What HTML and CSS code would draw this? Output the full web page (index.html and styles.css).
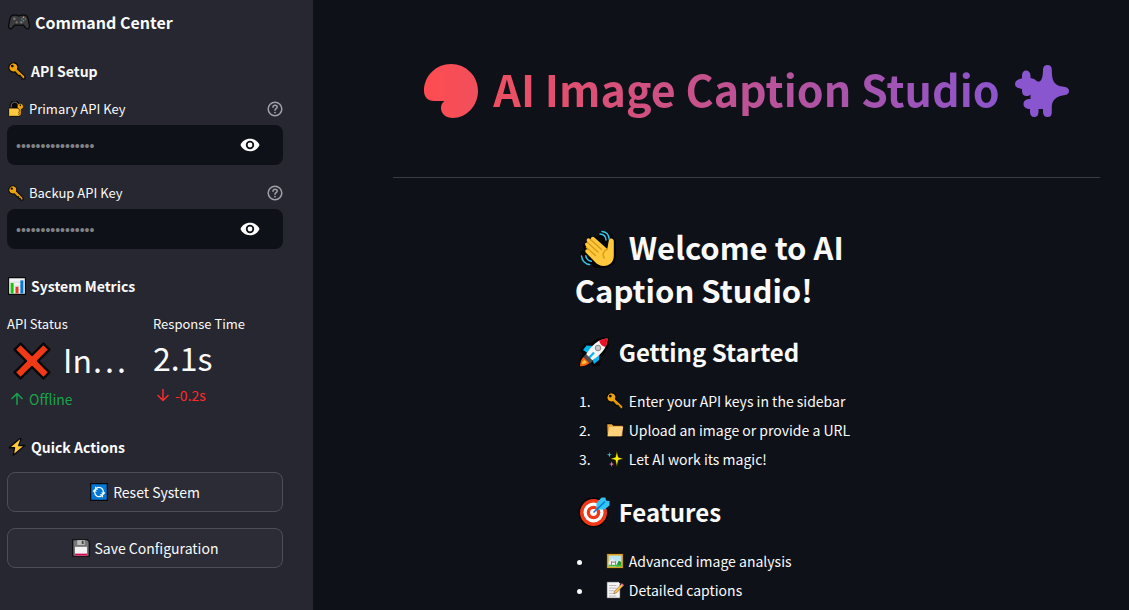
FILE: index.html
```html
<!DOCTYPE html>
<html lang="en">
<head>
<meta charset="utf-8">
<meta name="viewport" content="width=device-width, initial-scale=1">
<title>AI Image Caption Studio</title>
<link rel="stylesheet" href="styles.css">
</head>
<body>
<svg class="sprite" aria-hidden="true">
  <symbol id="gamepad" viewBox="0 0 24 24"><path d="M6 4.500h4l1 .8h2l1-.8h4c2.200 0 3.200 1.500 3.800 3.800l1.500 7.200c.7 4-2.600 5-4.300 2.500l-2.200-2.700H7.200L5 18c-1.700 2.500-5 1.500-4.300-2.500L2.200 8.300C2.800 6 3.800 4.500 6 4.500z" fill="#3b3b3d" stroke="#08080a" stroke-width="1.400"/><circle cx="7" cy="8.500" r="1.400" fill="#777"/><path d="M8.200 12.300h2.600M9.500 11v2.600" stroke="#777" stroke-width="1"/><circle cx="14.500" cy="12.300" r="1.300" fill="#777"/><circle cx="17" cy="7" r=".9" fill="#d9a441"/><circle cx="19" cy="8.800" r=".9" fill="#e0503c"/><circle cx="15.200" cy="8.800" r=".9" fill="#2f8fe0"/><circle cx="17" cy="10.500" r=".9" fill="#55a060"/></symbol>
  <symbol id="key" viewBox="0 0 24 24"><path d="M2.500 3.500C5-.2 11.500.2 13 5c.5 1.700.3 3-.3 4.300l9.800 9.500v3.700h-4v-2.300h-2.300v-2.400h-2.400L9.200 13C6 14.200 2.500 12.500 1.500 9.500c-.7-2.200-.3-4.300 1-6z" fill="#f0a30a" stroke="#08080a" stroke-width="1.600" stroke-linejoin="round"/><circle cx="5.700" cy="5.400" r="1.800" fill="#08080a"/><path d="M11 11.500l9.500 9" stroke="#c47f00" stroke-width="1"/></symbol>
  <symbol id="lock" viewBox="0 0 24 24"><path d="M4.800 12V7.500C4.800 3.700 7 1.700 10 1.700s5.200 2 5.200 5.800V12" fill="none" stroke="#08080a" stroke-width="4.600"/><path d="M4.800 12V7.500C4.800 3.700 7 1.700 10 1.700s5.200 2 5.200 5.800V12" fill="#08080a" stroke="#8d8d8d" stroke-width="1.200"/><rect x="1" y="10.500" width="18" height="12.500" rx="1" fill="#ffc83d" stroke="#08080a" stroke-width="1.400"/><path d="M14.500 5.500c1.500-2.500 6.500-2.500 8 .5s0 6-2.700 6.500v7.500l-2 2-1.800-2 1-1.500-1-1.500 1-1.500v-3c-2.500-1-4-4.500-2.500-7z" fill="#f0a30a" stroke="#08080a" stroke-width=".8"/><circle cx="18.500" cy="6.500" r="1.200" fill="#08080a"/></symbol>
  <symbol id="chart" viewBox="0 0 24 24"><path d="M.8.8h22.400v22.400H.8z" fill="#f2f2f2" stroke="#08080a" stroke-width="1.500"/><path d="M2 7h20M2 12h20M2 17h20" stroke="#d4d4d4"/><path d="M3.500 8h4v14h-4z" fill="#16c60c"/><path d="M10 13h4v9h-4z" fill="#e33b1e"/><path d="M16.500 4.500h4V22h-4z" fill="#0078d7"/></symbol>
  <symbol id="cross" viewBox="0 0 24 24"><path d="M4.800 1L12 8.200 19.200 1 23 4.800 15.800 12l7.200 7.200-3.800 3.800-7.200-7.200L4.800 23 1 19.200 8.200 12 1 4.800z" fill="#f03a17" stroke="#08080a" stroke-width="1.500" stroke-linejoin="round"/></symbol>
  <symbol id="bolt" viewBox="0 0 24 24"><path d="M15.500 1L1.500 13h7.300L7 23l15.500-13h-8.200l3.200-9z" fill="#ffc83d" stroke="#08080a" stroke-width="1.700" stroke-linejoin="round"/></symbol>
  <symbol id="reset" viewBox="0 0 24 24"><path d="M.9.9h22.200v22.200H.9z" fill="#0078d7" stroke="#08080a" stroke-width="1.600"/><g fill="none" stroke="#fff" stroke-width="1.500"><path d="M8 7.300c4-3.300 9.800-.6 9.800 4.700v2.500M16 16.700c-4 3.300-9.800.6-9.800-4.700V9.500"/><path d="M15.500 12.500l2.300 2.300 2.200-2.300M4 11.500l2.200-2.300 2.300 2.300M7.500 5v3.300h3M16.500 19v-3.300h-3"/></g></symbol>
  <symbol id="floppy" viewBox="0 0 24 24"><path d="M1 1h19.500L23 3.500V23H1z" fill="#77777a" stroke="#08080a" stroke-width="1.600"/><path d="M7 1.500h10V8H7z" fill="#bdbdbd"/><path d="M13 2.500h2.500v4.300H13z" fill="#444"/><path d="M4 10.500h16v11.700H4z" fill="#f3f3f3"/><path d="M4 19.500h16v2.700H4z" fill="#d3084e"/></symbol>
  <symbol id="wave" viewBox="0 0 38 38"><path d="M4 15l7-9 8 1 4-6 9 3 5 7v16l-2 7-8 4H16L3 29 1 22l4-2z" fill="#050507"/><path d="M6.500 15.500c-1.300-1.800.7-3.800 2.500-2.600l-1-1.400c-1.200-2 1.200-4.200 3-2.600l1.200 1c-1.200-2 1.200-4.200 3.200-2.400L28.300 19l1.500-8.500c.5-2.800 5-2.500 5 .7v14.500c0 6-4.300 10.300-10 10.300-4 0-6.500-1.700-8.500-3.700L7 22.800c-1.800-2 0-4.600 2.200-3.300z" fill="#ffc83d"/><path d="M9 13l10 9M11.500 9.500l11 10M7.500 17.500l9 8M28.500 19c-4.700 2-5.300 6.500-3.200 9" fill="none" stroke="#d99b18" stroke-width="1.400" stroke-linecap="round"/><path d="M21 4c3.500.2 5.800 2.500 6 6M23 1.500c4.500.5 7 3.500 7.200 7.800M6.800 25.800c.5 3 2.800 5 5.500 5.500M2.500 26c.5 4.800 4 8.300 8.200 8.600" fill="none" stroke="#32c5e9" stroke-width="1.500" stroke-linecap="round"/></symbol>
  <symbol id="rocket" viewBox="0 0 32 32"><path d="M31 1v8l-5 9-3 3-1 8-7 2-2-4-4 3-8 1 1-9 3-4-3-3 4-7 7-1 7-5z" fill="#050507"/><path d="M5 14l3.500-4.500 7 .5-6 7zM16 28l5-4 .5-6-7 6z" fill="#00b4f0"/><path d="M29.500 2.500C20 3 14 9 8 18.500l6 6C23 18.500 29 12.500 29.500 2.500z" fill="#f5f5f5"/><path d="M29.500 2.500c-3 .1-5.700.8-8.200 2.200.5 3.500 2.800 5.700 6.500 6.200 1.100-2.500 1.600-5.300 1.700-8.400z" fill="#e81224"/><circle cx="20" cy="12" r="2.800" fill="#c7c7c7" stroke="#858585"/><path d="M10 23l6-6.500" stroke="#00b4f0" stroke-width="2"/><path d="M8 18l7 7-3 2.500L5.500 21z" fill="#4b4b50"/><path d="M5.500 21l6 6c-2 2-5 3.500-9.500 3.200.2-4.200 1.200-7 3.500-9.200z" fill="#f7630c"/><path d="M6.500 24l2.400 2.300c-1 1-3 1.700-5 1.800.2-1.700 1-3 2.600-4.100z" fill="#ffc83d"/></symbol>
  <symbol id="folder" viewBox="0 0 24 24"><path d="M1 3.500h7l2 2h13l-.5 15.500H1.500z" fill="#eaa23b" stroke="#08080a" stroke-width="1.400"/><path d="M5 7.500h18l-3 12.800H2z" fill="#ffd27a"/></symbol>
  <symbol id="sparkles" viewBox="0 0 24 24"><path d="M14.500 1l2 8.500 7 2-7 2-2 9.500-2-9.500-7-2 7-2z" fill="#fff100" stroke="#08080a" stroke-width=".8"/><path d="M4.500 2.500l.8 3 2.700.8-2.700.8-.8 3-.8-3L1 6.300l2.700-.8z" fill="#32c5e9"/><path d="M7.500 15l.9 3 2.600.8-2.600.8-.9 3-.9-3-2.600-.8 2.600-.8z" fill="#f06ba8"/></symbol>
  <symbol id="target" viewBox="0 0 32 32"><circle cx="15.500" cy="16.500" r="15" fill="#050507"/><path d="M19 7l5-6h4v3h3v6l-6 5z" fill="#050507"/><circle cx="15.500" cy="16.500" r="13.500" fill="#f03a17"/><circle cx="15.500" cy="16.500" r="10" fill="#fff"/><circle cx="15.500" cy="16.500" r="6.800" fill="#f03a17"/><circle cx="15.500" cy="16.500" r="3.400" fill="#fff"/><path d="M18.500 13.500V7l5-5.500h4l.5 3 3.500.5v4.500l-5 4z" fill="#32c5f4"/><path d="M15.500 16.500L27 5.500" stroke="#0078d7" stroke-width="1.400"/></symbol>
  <symbol id="picture" viewBox="0 0 24 24"><path d="M.8 2h22.400v20H.8z" fill="#dda01e" stroke="#08080a"/><path d="M3.500 4.700h17v14.600h-17z" fill="#b9e2f2"/><path d="M3.500 13l5-4.500 5 5 4-4 3 3v6.800h-17z" fill="#e7eef0"/><path d="M13 19.300l4-8 3.500 2v6z" fill="#1b9d35"/><path d="M3.500 17h17v2.300h-17z" fill="#3fbb41"/><path d="M7 12l1.500 1h3L13 12v5H7z" fill="#815249"/><path d="M8 14h4v3H8z" fill="#fff"/></symbol>
  <symbol id="memo" viewBox="0 0 24 24"><path d="M1 1h16l2 2v20H1z" fill="#f5f5f5" stroke="#08080a"/><path d="M4 6h10M4 9.500h10M4 13h7M4 16.500h7M4 20h10" stroke="#b5b5b5" stroke-width="1.200"/><path d="M10.500 17l1-3.500L21 3.500 23.500 6 14 15.800z" fill="#ffc14d" stroke="#55401c" stroke-width=".6"/><path d="M20 4.500L21.500 3 24 5.500 22.500 7z" fill="#f2698b"/></symbol>
  <symbol id="help" viewBox="0 0 16 16"><g fill="none" stroke="#a0a1a8" stroke-width="1.500" stroke-linecap="round"><circle cx="8" cy="8" r="6.800"/><path d="M6 6.300c.1-1.500 1-2.100 2.100-2.100 1.200 0 2.100.7 2.100 1.800C10.200 7.600 8 7.700 8 9.300"/></g><circle cx="8" cy="11.600" r=".9" fill="#a0a1a8"/></symbol>
  <symbol id="eye" viewBox="0 0 20 14"><path d="M10 .8c4.400 0 8 2.500 9.500 6.200-1.500 3.700-5.100 6.200-9.500 6.200S2 10.700.5 7C2 3.300 5.600.8 10 .8z" fill="#fff"/><circle cx="10" cy="7" r="4.200" fill="#0e1117"/><circle cx="10" cy="7" r="2.400" fill="#fff"/></symbol>
</svg>

<div class="app">
  <aside class="sidebar">
    <h2 class="side-title"><svg class="icon icon-md"><use href="#gamepad"/></svg>Command Center</h2>

    <section class="group setup">
      <h3 class="side-heading"><svg class="icon icon-sm"><use href="#key"/></svg>API Setup</h3>
      <div class="field">
        <div class="field-head">
          <label for="primary"><svg class="icon icon-xs"><use href="#lock"/></svg>Primary API Key</label>
          <button class="plain" type="button" aria-label="Help for primary key"><svg class="help"><use href="#help"/></svg></button>
        </div>
        <div class="password">
          <input id="primary" type="password" placeholder="••••••••••••••••">
          <button class="plain" type="button" aria-label="Show primary key"><svg class="eye"><use href="#eye"/></svg></button>
        </div>
      </div>
      <div class="field">
        <div class="field-head">
          <label for="backup"><svg class="icon icon-xs"><use href="#key"/></svg>Backup API Key</label>
          <button class="plain" type="button" aria-label="Help for backup key"><svg class="help"><use href="#help"/></svg></button>
        </div>
        <div class="password">
          <input id="backup" type="password" placeholder="••••••••••••••••">
          <button class="plain" type="button" aria-label="Show backup key"><svg class="eye"><use href="#eye"/></svg></button>
        </div>
      </div>
    </section>

    <section class="group">
      <h3 class="side-heading"><svg class="icon icon-sm"><use href="#chart"/></svg>System Metrics</h3>
      <div class="metrics">
        <div class="metric">
          <span class="metric-label">API Status</span>
          <span class="metric-value with-icon"><svg class="icon icon-xl"><use href="#cross"/></svg><span>In<span class="ellipsis">…</span></span></span>
          <span class="delta up"><svg viewBox="0 0 14 14"><path d="M7 13V1.500M1.500 7L7 1.500 12.500 7"/></svg>Offline</span>
        </div>
        <div class="metric">
          <span class="metric-label">Response Time</span>
          <span class="metric-value">2.1s</span>
          <span class="delta down"><svg viewBox="0 0 14 14"><path d="M7 1v11.500M1.500 7L7 12.500 12.500 7"/></svg>-0.2s</span>
        </div>
      </div>
    </section>

    <section class="group actions">
      <h3 class="side-heading"><svg class="icon icon-sm"><use href="#bolt"/></svg>Quick Actions</h3>
      <button class="action" type="button"><svg class="icon icon-sm"><use href="#reset"/></svg>Reset System</button>
      <button class="action" type="button"><svg class="icon icon-sm"><use href="#floppy"/></svg>Save Configuration</button>
    </section>
  </aside>

  <main class="main">
    <h1 class="title">
      <svg class="title-icon" viewBox="0 0 54 54"><defs><linearGradient id="warm"><stop offset="0" stop-color="#ff4c50"/><stop offset="1" stop-color="#f04f5d"/></linearGradient></defs><path d="M27 0C42 0 54 12 54 27c0 15-12 27-25 27-7 0-12-4-12-10 0-3 1-5 3.500-7H10C4 37 0 33 0 27 0 12 12 0 27 0z" fill="url(#warm)"/></svg>
      <span class="title-text">AI Image Caption Studio</span>
      <svg class="title-icon" viewBox="0 0 54 54"><path d="M32.500 1c2.800 0 4.300 2 4.300 4.500 0 10 1.500 16 10.500 17 4 .5 6.700 1.500 6.700 4.500s-2.500 4-6.500 4.500c-6 .8-10.500 5-10.700 11v6c0 3-1.500 4.500-4.300 4.500S28 51 28 48v-3h-4.500v3c0 3-1.500 5-4.200 5S15 51 15 48v-3c-3.500 0-6.500-1.500-6.500-5s2.500-5 7-5v-4.500c-1 1-2.300 1.500-4 1.500-3 0-4.500-2-4.500-5v-2c-4-.5-7-2-7-5s3-5 7-5.500v-3c0-3 1.500-5 4-5s4.500 2 4.500 5v2.500c2.500.5 4.500 1 6 3C26 19.500 28 14 28 5.500 28 3 29.500 1 32.500 1z" fill="#8956d0"/></svg>
    </h1>
    <hr class="rule">
    <div class="columns">
      <article class="welcome">
        <h2><svg class="icon icon-xl"><use href="#wave"/></svg>Welcome to AI Caption Studio!</h2>
        <h3><svg class="icon icon-lg"><use href="#rocket"/></svg>Getting Started</h3>
        <ol>
          <li><svg class="icon icon-sm"><use href="#key"/></svg>Enter your API keys in the sidebar</li>
          <li><svg class="icon icon-sm"><use href="#folder"/></svg>Upload an image or provide a URL</li>
          <li><svg class="icon icon-sm"><use href="#sparkles"/></svg>Let AI work its magic!</li>
        </ol>
        <h3><svg class="icon icon-lg"><use href="#target"/></svg>Features</h3>
        <ul>
          <li><svg class="icon icon-sm"><use href="#picture"/></svg>Advanced image analysis</li>
          <li><svg class="icon icon-sm"><use href="#memo"/></svg>Detailed captions</li>
        </ul>
      </article>
    </div>
  </main>
</div>
</body>
</html>
```
FILE: styles.css
```css
* { box-sizing: border-box; }
body {
  margin: 0;
  background: #0e1117;
  color: #fafafa;
  font: 14px/24px "Noto Sans CJK SC", "Noto Sans CJK JP", "Noto Sans", sans-serif;
}
h1, h2, h3, ol, ul { margin: 0; padding: 0; }
button, input { font: inherit; color: inherit; }
.sprite { position: absolute; width: 0; height: 0; }
.icon { flex: none; vertical-align: -3px; }
.icon-xs { width: 16px; height: 16px; margin-right: 5px; }
.icon-sm { width: 18px; height: 18px; margin-right: 5px; }
.icon-md { width: 22px; height: 22px; margin-right: 5px; }
.icon-lg { width: 32px; height: 32px; margin-right: 9px; }
.icon-xl { width: 38px; height: 38px; margin-right: 12px; }

.app { display: flex; min-height: 100vh; }
.sidebar {
  flex: none;
  width: 313px;
  padding: 10px 30px 30px 7px;
  background: #262730;
}
.side-title, .side-heading {
  display: flex;
  align-items: center;
  padding-left: 1px;
  font-weight: 700;
  line-height: 24px;
}
.side-title { font-size: 16px; }
.side-heading { font-size: 14px; }
.group { margin-top: 25px; }
.group.actions { margin-top: 24px; }
.field { margin-top: 14px; }
.field + .field { margin-top: 16px; }
.field-head {
  display: flex;
  justify-content: space-between;
  align-items: center;
  height: 23px;
  margin-bottom: 5px;
}
.field-head label { display: flex; align-items: center; padding-left: 1px; font-size: 13px; }
.plain { display: flex; padding: 0; border: 0; background: none; }
.help { width: 16px; height: 16px; }
.eye { width: 20px; height: 14px; }
.password {
  display: flex;
  align-items: center;
  height: 40px;
  padding: 0 23px 0 9px;
  border-radius: 8px;
  background: #0e1117;
}
.password input {
  flex: 1;
  min-width: 0;
  padding: 2px 0 0;
  border: 0;
  outline: 0;
  background: none;
  font-family: "Liberation Sans", sans-serif;
}
.password input::placeholder { color: #808185; opacity: 1; }

.metrics { display: grid; grid-template-columns: 1fr 1fr; gap: 16px; margin-top: 16px; }
.metric { display: flex; flex-direction: column; }
.metric-label { font-size: 13px; line-height: 20px; }
.metric-value { margin: 1px 0 4px; font-size: 32px; line-height: 44px; white-space: nowrap; }
.metric-value.with-icon { display: flex; align-items: center; height: 48px; padding-left: 6px; }
.with-icon .icon { margin-top: 4px; }
.ellipsis { font-family: "Noto Sans CJK KR", "Noto Sans", sans-serif; }
.delta { display: flex; align-items: center; gap: 5px; padding-left: 3px; }
.delta svg { width: 14px; height: 14px; fill: none; stroke: currentColor; stroke-width: 1.5; }
.up { color: #16a34a; }
.down { color: #ff2b2b; }

.action {
  display: flex;
  justify-content: center;
  align-items: center;
  width: 100%;
  height: 40px;
  margin-top: 16px;
  border: 1px solid #4c4d56;
  border-radius: 8px;
  background: #2b2c36;
}
.side-heading + .action { margin-top: 13px; }

.main { flex: 1; min-width: 0; padding: 48px 29px 6px 80px; }
.title {
  display: flex;
  justify-content: center;
  align-items: center;
  gap: 15px;
  min-height: 86px;
  font-size: 43px;
  line-height: 64px;
}
.title-icon { flex: none; width: 54px; height: 54px; }
.title-text {
  padding-bottom: 6px;
  background: linear-gradient(90deg, #ee4f60, #8c55cc);
  background-clip: text;
  -webkit-background-clip: text;
  color: transparent;
}
.rule { margin: 43px 0 47px; border: 0; border-top: 1px solid #3a3c43; }
.columns { display: grid; grid-template-columns: 1fr 2fr 1fr; gap: 10px; }
.welcome { grid-column: 2; }
.welcome h2 { font-size: 31px; line-height: 43px; }
.welcome h2 .icon { margin: -8px 12px -8px 4px; vertical-align: 0; }
.welcome h3 { display: flex; align-items: center; margin: 24px 0 20px; padding-left: 3px; font-size: 24px; line-height: 34px; }
.welcome li { margin-top: 5px; }
.welcome li:first-child { margin-top: 0; }
.welcome ol { padding-left: 19px; }
.welcome ol li { padding-left: 12px; }
.welcome ul { padding-left: 19px; }
.welcome ul li { padding-left: 12px; }
```
